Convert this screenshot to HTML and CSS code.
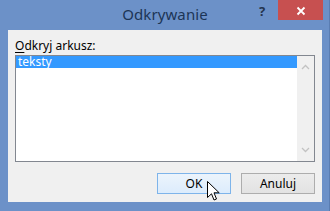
FILE: index.html
```html
<!DOCTYPE html>
<html>
<head>
<meta charset="utf-8">
<link rel="stylesheet" href="styles.css">
</head>
<body>
<div class="window">
  <div class="titlebar">
    <div class="title">Odkrywanie</div>
    <div class="help">?</div>
    <div class="close">
      <svg width="10" height="10" viewBox="0 0 10 10"><path d="M1.5 1.5 L8.5 8.5 M8.5 1.5 L1.5 8.5" stroke="#fff" stroke-width="1.8"/></svg>
    </div>
  </div>
  <div class="client">
    <div class="label"><u>O</u>dkryj arkusz:</div>
    <div class="listbox">
      <div class="items">
        <div class="item selected">teksty</div>
      </div>
      <div class="scroll">
        <svg width="9" height="6" viewBox="0 0 9 6"><path d="M1 5 L4.5 1.5 L8 5" fill="none" stroke="#c2c2c2" stroke-width="1.3"/></svg>
        <svg width="9" height="6" viewBox="0 0 9 6"><path d="M1 1 L4.5 4.5 L8 1" fill="none" stroke="#c2c2c2" stroke-width="1.3"/></svg>
      </div>
    </div>
    <div class="buttons">
      <div class="btn default">OK</div>
      <div class="btn">Anuluj</div>
    </div>
  </div>
  <svg class="cursor" width="13" height="21" viewBox="0 0 13 21">
    <path d="M0.5 0.5 L0.5 16.5 L4.5 12.8 L7 19 L9.5 18 L7 11.8 L12.2 11.8 Z" fill="#fff" stroke="#000" stroke-width="1" stroke-linejoin="miter"/>
  </svg>
</div>
</body>
</html>
```

FILE: styles.css
```css
html, body {
  margin: 0;
  padding: 0;
}
body {
  width: 330px;
  height: 211px;
  overflow: hidden;
  font-family: "Segoe UI", "Noto Sans", "Open Sans", sans-serif;
}
.window {
  position: relative;
  width: 330px;
  height: 211px;
  box-sizing: border-box;
  background: #6c91c8;
  border-right: 1px solid #5a7db2;
  padding: 0 7px 9px 8px;
  display: flex;
  flex-direction: column;
}
.titlebar {
  height: 30px;
  display: flex;
  align-items: flex-start;
  position: relative;
}
.title {
  position: absolute;
  left: 0;
  right: 0;
  top: 4px;
  text-align: center;
  font-size: 15px;
  line-height: 20px;
  color: #1c3556;
  letter-spacing: 0.1px;
}
.help {
  position: absolute;
  left: 251px;
  top: 3px;
  font-size: 13px;
  font-weight: bold;
  color: #24344e;
  line-height: 16px;
}
.close {
  position: absolute;
  left: 270px;
  top: 0;
  width: 45px;
  height: 20px;
  background: #c75050;
  display: flex;
  align-items: center;
  justify-content: center;
}
.close svg { display: block; margin-top: 1px; }
.client {
  flex: 1;
  background: #f0f0f0;
  padding: 8px 7px 8px 7px;
  display: flex;
  flex-direction: column;
}
.label {
  font-size: 12px;
  line-height: 15px;
  color: #000;
  margin-bottom: 2px;
}
.label u { text-decoration-thickness: 1px; text-underline-offset: 2px; }
.listbox {
  height: 107px;
  box-sizing: border-box;
  border: 1px solid #828790;
  background: #fff;
  display: flex;
}
.items {
  flex: 1;
}
.item {
  height: 12px;
  line-height: 12px;
  font-size: 12px;
  padding-left: 2px;
  padding-top: 0;
}
.item.selected {
  background: #3399ff;
  color: #fff;
}
.scroll {
  width: 17px;
  background: #f0f0f0;
  display: flex;
  flex-direction: column;
  justify-content: space-between;
  align-items: center;
  padding: 8px 0 8px 0;
}
.scroll svg { display: block; }
.buttons {
  margin-top: 11px;
  display: flex;
  justify-content: flex-end;
  gap: 10px;
}
.btn {
  width: 74px;
  height: 21px;
  box-sizing: border-box;
  border: 1px solid #adadad;
  background: linear-gradient(#ececec, #e2e2e2);
  font-size: 12px;
  line-height: 19px;
  text-align: center;
  color: #000;
}
.btn.default {
  border-color: #7eb4ea;
  background: linear-gradient(#ecf4fc, #dcecfc);
}
.cursor {
  position: absolute;
  left: 207px;
  top: 181px;
}
```
